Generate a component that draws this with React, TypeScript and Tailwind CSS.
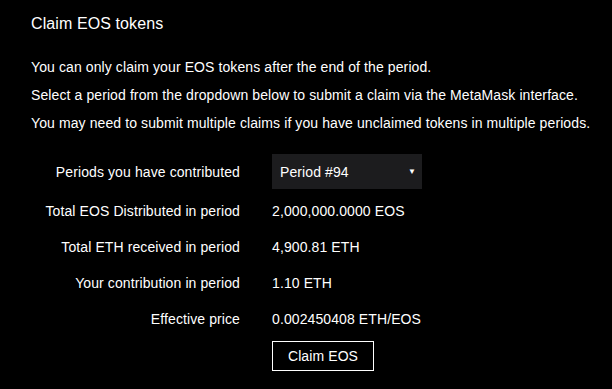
const rows = [
  { label: "Total EOS Distributed in period", value: "2,000,000.0000 EOS" },
  { label: "Total ETH received in period", value: "4,900.81 ETH" },
  { label: "Your contribution in period", value: "1.10 ETH" },
  { label: "Effective price", value: "0.002450408 ETH/EOS" },
];

export default function App() {
  return (
    <div className="min-h-screen w-full bg-black text-white font-['Liberation_Sans',Arial,sans-serif] pt-3 pl-[31px]">
      <h2 className="text-base leading-6 tracking-[0.1px]">Claim EOS tokens</h2>

      <div className="mt-[17px] text-sm leading-7 tracking-[0.1px]">
        <p>You can only claim your EOS tokens after the end of the period.</p>
        <p>Select a period from the dropdown below to submit a claim via the MetaMask interface.</p>
        <p>You may need to submit multiple claims if you have unclaimed tokens in multiple periods.</p>
      </div>

      <div className="mt-[17px] text-sm tracking-[0.1px] -ml-[31px]">
        <div className="flex items-center h-[35px]">
          <div className="w-[240px] text-right">Periods you have contributed</div>
          <div className="ml-8 w-[150px] h-[35px] bg-[#1c1c1e] flex items-center justify-between pl-2 pr-[6px]">
            <span>Period #94</span>
            <span className="text-[8px]">▼</span>
          </div>
        </div>
        <div className="mt-1">
          {rows.map((r) => (
            <div key={r.label} className="flex items-center h-9">
              <div className="w-[240px] text-right">{r.label}</div>
              <div className="ml-8">{r.value}</div>
            </div>
          ))}
        </div>
        <div className="mt-1 ml-[272px]">
          <button className="w-[102px] h-[30px] border border-white text-sm">Claim EOS</button>
        </div>
      </div>
    </div>
  );
}
